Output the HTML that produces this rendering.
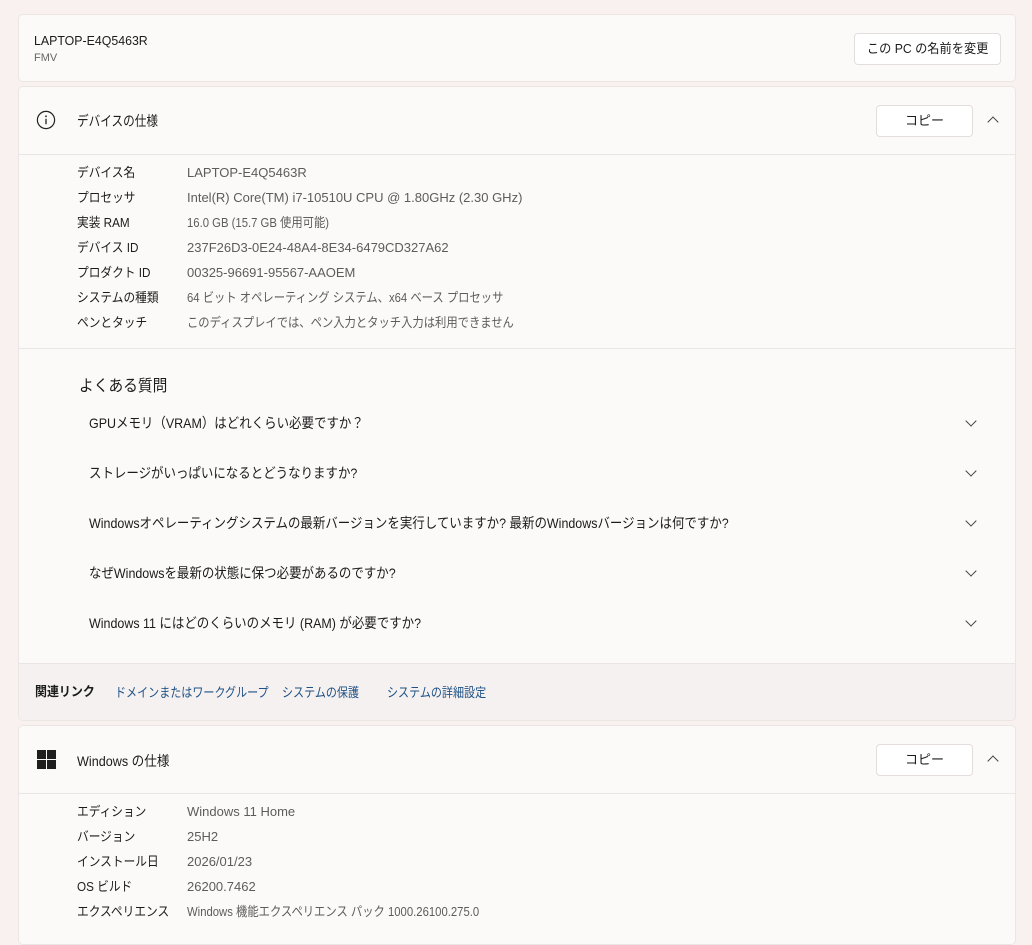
<!DOCTYPE html>
<html><head><meta charset="utf-8"><style>
*{margin:0;padding:0;box-sizing:border-box}
body{width:1032px;height:924px;overflow:hidden;background:#f8f1ef;font-family:"Liberation Sans","Noto Sans CJK JP",sans-serif;color:#1b1b1b;position:relative}
.card{position:absolute;left:18px;width:998px;background:#fcfaf9;border:1px solid #ebe6e4;border-radius:5px}
.abs{position:absolute;white-space:nowrap;transform-origin:0 50%}
.btn{position:absolute;background:#fff;border:1px solid #e3dedc;border-radius:4px;font-size:13px;text-align:center}
.row{position:absolute;left:58px;font-size:13px;line-height:16px;height:16px;white-space:nowrap;width:900px}
.row b{font-weight:normal;position:absolute;left:0;top:0;transform-origin:0 50%;transform:scaleX(.9)}
.row span{position:absolute;left:110px;top:0;color:#5c5c5c;transform-origin:0 50%}
.j{transform:scaleX(.87)}
.hr{position:absolute;left:0;right:0;height:1px;background:#ebe6e4}
.faq{position:absolute;left:70px;font-size:14px;line-height:18px;white-space:nowrap;transform-origin:0 50%;transform:scaleX(.89)}
.chev{position:absolute;left:948px;width:8px;height:8px;border-right:1.3px solid #444;border-bottom:1.3px solid #444;transform:rotate(45deg)}
.up{position:absolute;width:8px;height:8px;border-left:1.3px solid #444;border-top:1.3px solid #444;transform:rotate(45deg)}
.lnk{color:#1f5186;font-size:13px;transform:scaleX(.85)}
</style></head><body>
<div class="card" style="top:14px;height:68px">
<div class="abs" style="left:15px;top:18px;font-size:13px;transform:scaleX(.95)">LAPTOP-E4Q5463R</div>
<div class="abs" style="left:15px;top:37px;font-size:11px;color:#666">FMV</div>
<div class="btn" style="left:835px;top:18px;width:147px;height:32px;line-height:30px"><span style="display:inline-block;transform:scaleX(.94)">この PC の名前を変更</span></div>
</div>
<div class="card" style="top:86px;height:635px;overflow:hidden">
<svg class="abs" style="left:17px;top:23px" width="20" height="20" viewBox="0 0 20 20"><circle cx="10" cy="10" r="8.6" fill="none" stroke="#222" stroke-width="1.2"/><circle cx="10" cy="6.3" r="0.9" fill="#222"/><path d="M10 8.8v5.5" stroke="#222" stroke-width="1.3"/></svg>
<div class="abs" style="left:58px;top:24px;font-size:14px;transform:scaleX(.83)">デバイスの仕様</div>
<div class="btn" style="left:857px;top:18px;width:97px;height:32px;line-height:30px">コピー</div>
<div class="up" style="left:970px;top:31px"></div>
<div class="hr" style="top:67px"></div>
<div class="row" style="top:78px"><b>デバイス名</b><span>LAPTOP-E4Q5463R</span></div>
<div class="row" style="top:103px"><b>プロセッサ</b><span>Intel(R) Core(TM) i7-10510U CPU @ 1.80GHz (2.30 GHz)</span></div>
<div class="row" style="top:128px"><b>実装 RAM</b><span class="j">16.0 GB (15.7 GB 使用可能)</span></div>
<div class="row" style="top:153px"><b>デバイス ID</b><span>237F26D3-0E24-48A4-8E34-6479CD327A62</span></div>
<div class="row" style="top:178px"><b>プロダクト ID</b><span>00325-96691-95567-AAOEM</span></div>
<div class="row" style="top:203px"><b>システムの種類</b><span class="j">64 ビット オペレーティング システム、x64 ベース プロセッサ</span></div>
<div class="row" style="top:228px"><b>ペンとタッチ</b><span class="j">このディスプレイでは、ペン入力とタッチ入力は利用できません</span></div>
<div class="hr" style="top:261px"></div>
<div class="abs" style="left:60px;top:285px;font-size:16px;transform:scaleX(.92)">よくある質問</div>
<div class="faq" style="top:327px">GPUメモリ（VRAM）はどれくらい必要ですか？</div><div class="chev" style="top:330px"></div>
<div class="faq" style="top:377px">ストレージがいっぱいになるとどうなりますか?</div><div class="chev" style="top:380px"></div>
<div class="faq" style="top:427px">Windowsオペレーティングシステムの最新バージョンを実行していますか? 最新のWindowsバージョンは何ですか?</div><div class="chev" style="top:430px"></div>
<div class="faq" style="top:477px">なぜWindowsを最新の状態に保つ必要があるのですか?</div><div class="chev" style="top:480px"></div>
<div class="faq" style="top:527px">Windows 11 にはどのくらいのメモリ (RAM) が必要ですか?</div><div class="chev" style="top:530px"></div>
<div style="position:absolute;left:0;right:0;top:576px;height:60px;background:#f5f1f0;border-top:1px solid #ebe6e4"></div>
<div class="abs" style="left:16px;top:594px;font-size:13px;font-weight:bold;transform:scaleX(.92)">関連リンク</div>
<div class="abs lnk" style="left:96px;top:595px">ドメインまたはワークグループ</div>
<div class="abs lnk" style="left:263px;top:595px">システムの保護</div>
<div class="abs lnk" style="left:368px;top:595px">システムの詳細設定</div>
</div>
<div class="card" style="top:725px;height:220px">
<svg class="abs" style="left:18px;top:24px" width="19" height="19" viewBox="0 0 19 19" fill="#1e1e1e"><rect x="0" y="0" width="9" height="9"/><rect x="10" y="0" width="9" height="9"/><rect x="0" y="10" width="9" height="9"/><rect x="10" y="10" width="9" height="9"/></svg>
<div class="abs" style="left:58px;top:25px;font-size:14px;transform:scaleX(.9)">Windows の仕様</div>
<div class="btn" style="left:857px;top:18px;width:97px;height:32px;line-height:30px">コピー</div>
<div class="up" style="left:970px;top:31px"></div>
<div class="hr" style="top:67px"></div>
<div class="row" style="top:78px"><b>エディション</b><span>Windows 11 Home</span></div>
<div class="row" style="top:103px"><b>バージョン</b><span>25H2</span></div>
<div class="row" style="top:128px"><b>インストール日</b><span>2026/01/23</span></div>
<div class="row" style="top:153px"><b>OS ビルド</b><span>26200.7462</span></div>
<div class="row" style="top:178px"><b>エクスペリエンス</b><span class="j">Windows 機能エクスペリエンス パック 1000.26100.275.0</span></div>
</div>
</body></html>
